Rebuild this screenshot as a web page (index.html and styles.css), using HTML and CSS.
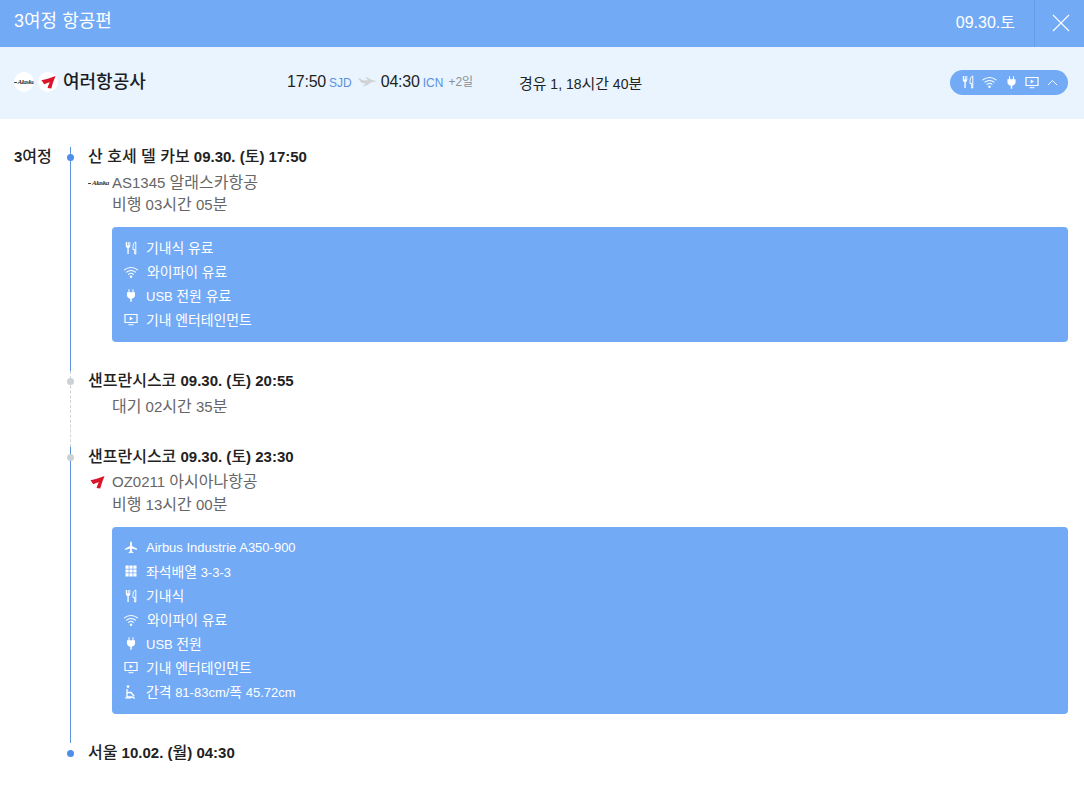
FILE: index.html
```html
<!DOCTYPE html>
<html lang="ko">
<head>
<meta charset="utf-8">
<title>3여정 항공편</title>
<link rel="stylesheet" href="styles.css">
</head>
<body>
<svg class="defs" width="0" height="0" aria-hidden="true">
  <symbol id="i-meal" viewBox="0 0 12 14">
    <path d="M.8 1v3.800c0 1.200.7 2 1.600 2.200V13h1.300V7c.9-.2 1.600-1 1.600-2.200V1h-.9v3.400h-.7V1H3v3.400h-.7V1z" fill="currentColor"/>
    <path d="M10.800 1C9 1.500 8 3.500 8 5.500V8.500h1.700V13h1.100z" fill="none" stroke="currentColor" stroke-width="1"/>
  </symbol>
  <symbol id="i-wifi" viewBox="0 0 16 14">
    <g fill="none" stroke="currentColor" stroke-width="1.100" stroke-linecap="round">
      <path d="M1 4.800C4.900 1.200 11.100 1.200 15 4.800"/>
      <path d="M3.200 7.200C5.900 4.800 10.100 4.800 12.800 7.200"/>
      <path d="M5.400 9.500C6.900 8.200 9.100 8.200 10.600 9.500"/>
    </g>
    <circle cx="8" cy="12" r="1.300" fill="currentColor"/>
  </symbol>
  <symbol id="i-plug" viewBox="0 0 10 14">
    <path d="M2.200 0h1.200v3.500h3.200V0h1.200v3.500H9.500v3.300C9.500 9 8 10.300 5.800 10.500V14H4.200v-3.500C2 10.300.5 9 .5 6.800V3.500h1.700z" fill="currentColor"/>
  </symbol>
  <symbol id="i-screen" viewBox="0 0 14 13">
    <path d="M1 1.500h12v8H1z" fill="none" stroke="currentColor" stroke-width="1.200"/>
    <path d="M5.700 3.600l3.400 1.900-3.400 1.900z" fill="currentColor"/>
    <path d="M4.500 11.200h5v1h-5z" fill="currentColor"/>
  </symbol>
  <symbol id="i-plane" viewBox="0 0 14 14">
    <path d="M7 .5c.6 0 1 .9 1 1.800v3l5.500 3v1.400L8 8v3l1.500 1.200v1L7 12.600l-2.500.6v-1L6 11V8L.5 9.700V8.300l5.500-3v-3C6 1.400 6.400.5 7 .5z" fill="currentColor"/>
  </symbol>
  <symbol id="i-seats" viewBox="0 0 12 12">
    <path d="M.5.500h3.200v3.200H.5zM4.400.500h3.200v3.200H4.400zM8.300.500h3.200v3.200H8.300zM.5 4.400h3.200v3.200H.5zM4.400 4.400h3.200v3.200H4.400zM8.300 4.400h3.200v3.200H8.300zM.5 8.300h3.200v3.200H.5zM4.400 8.300h3.200v3.200H4.400zM8.300 8.300h3.200v3.200H8.300z" fill="currentColor"/>
  </symbol>
  <symbol id="i-legroom" viewBox="0 0 13 14">
    <circle cx="3.500" cy="1.600" r="1.300" fill="currentColor"/>
    <path d="M2.500 4v8h5.300l2.500 1.500" fill="none" stroke="currentColor" stroke-width="1.300"/>
    <path d="M2.500 7.500h4l3.200 3.700" fill="none" stroke="currentColor" stroke-width="1.300"/>
    <path d="M.8 12.800h6" fill="none" stroke="currentColor" stroke-width="1.200"/>
  </symbol>
  <symbol id="i-asiana" viewBox="0 0 16 14">
    <path d="M.5 5C5 4.300 11 2.500 15.500.5 14 4.500 12 9 11 13.800L7 13.500C7.500 11 8.500 9 9.500 7.300 7.500 7.700 5.500 8.300 3.500 9.500z" fill="#d9142b"/>
  </symbol>
</svg>

<header class="topbar">
  <h1 class="topbar-title">3여정 항공편</h1>
  <div class="topbar-date">09.30.토</div>
  <button class="topbar-close" type="button" aria-label="닫기">
    <svg width="18" height="18" viewBox="0 0 18 18"><path d="M1 1l16 16M17 1L1 17" stroke="#fff" stroke-width="1.100" fill="none"/></svg>
  </button>
</header>

<section class="summary">
  <div class="carrier">
    <span class="logo-disc"><span class="alaska-mark">Alaska</span></span>
    <span class="logo-disc"><svg class="asiana" width="15" height="14"><use href="#i-asiana"/></svg></span>
    <strong class="carrier-name">여러항공사</strong>
  </div>
  <div class="times">
    <span class="time">17:50</span><span class="code">SJD</span>
    <svg class="route-plane" width="18" height="10" viewBox="0 0 18 10"><path d="M0 1.200l2 .0 2.500 2L10 3.200 7.500.2h1.600l5 3 3 .2c.6.300.6.800 0 1L13 5.500 9.500 8l-5 1.600L7.500 6.200 3.500 6z" fill="#cfd3d8"/></svg>
    <span class="time">04:30</span><span class="code">ICN</span>
    <span class="plus">+2일</span>
  </div>
  <div class="stops"><span class="ko">경유</span> 1, 18<span class="ko">시간</span> 40<span class="ko">분</span></div>
  <button class="amenity-pill" type="button" aria-label="서비스 접기">
    <svg class="pi-meal" width="12" height="14"><use href="#i-meal"/></svg>
    <svg class="pi-wifi" width="15" height="14"><use href="#i-wifi"/></svg>
    <svg class="pi-plug" width="9" height="13"><use href="#i-plug"/></svg>
    <svg class="pi-screen" width="14" height="13"><use href="#i-screen"/></svg>
    <svg class="pi-chev" width="11" height="7" viewBox="0 0 11 7"><path d="M1 6l4.500-4.500L10 6" fill="none" stroke="currentColor" stroke-width="1"/></svg>
  </button>
</section>

<main class="itinerary">
  <div class="leg-label">3<span class="ko">여정</span></div>
  <div class="timeline">
    <section class="seg seg-flight">
      <span class="dot dot-blue"></span>
      <h2 class="stop"><span class="ko">산 호세 델 카보</span> 09.30. (<span class="ko">토</span>) 17:50</h2>
      <div class="detail flight-line first">
        <span class="mini-logo"><span class="alaska-mark dark">Alaska</span></span>AS1345 <span class="ko">알래스카항공</span>
      </div>
      <div class="detail"><span class="ko">비행</span> 03<span class="ko">시간</span> 05<span class="ko">분</span></div>
      <ul class="amenities">
        <li><svg class="ic" width="12" height="14"><use href="#i-meal"/></svg><span class="ko">기내식 유료</span></li>
        <li><svg class="ic" width="15" height="14"><use href="#i-wifi"/></svg><span class="ko nudge">와이파이 유료</span></li>
        <li><svg class="ic" width="9" height="13"><use href="#i-plug"/></svg><span>USB <span class="ko">전원 유료</span></span></li>
        <li><svg class="ic" width="14" height="13"><use href="#i-screen"/></svg><span class="ko">기내 엔터테인먼트</span></li>
      </ul>
    </section>

    <section class="seg seg-wait">
      <span class="dot dot-grey"></span>
      <h2 class="stop"><span class="ko">샌프란시스코</span> 09.30. (<span class="ko">토</span>) 20:55</h2>
      <div class="detail wait-line"><span class="ko">대기</span> 02<span class="ko">시간</span> 35<span class="ko">분</span></div>
    </section>

    <section class="seg seg-flight seg-second">
      <span class="dot dot-grey"></span>
      <h2 class="stop"><span class="ko">샌프란시스코</span> 09.30. (<span class="ko">토</span>) 23:30</h2>
      <div class="detail flight-line">
        <span class="mini-logo"><svg width="15" height="14"><use href="#i-asiana"/></svg></span>OZ0211 <span class="ko">아시아나항공</span>
      </div>
      <div class="detail"><span class="ko">비행</span> 13<span class="ko">시간</span> 00<span class="ko">분</span></div>
      <ul class="amenities">
        <li><svg class="ic" width="13" height="13"><use href="#i-plane"/></svg><span>Airbus Industrie A350-900</span></li>
        <li><svg class="ic" width="12" height="12"><use href="#i-seats"/></svg><span><span class="ko">좌석배열</span> 3-3-3</span></li>
        <li><svg class="ic" width="12" height="14"><use href="#i-meal"/></svg><span class="ko">기내식</span></li>
        <li><svg class="ic" width="15" height="14"><use href="#i-wifi"/></svg><span class="ko nudge">와이파이 유료</span></li>
        <li><svg class="ic" width="9" height="13"><use href="#i-plug"/></svg><span>USB <span class="ko">전원</span></span></li>
        <li><svg class="ic" width="14" height="13"><use href="#i-screen"/></svg><span class="ko">기내 엔터테인먼트</span></li>
        <li><svg class="ic" width="13" height="14"><use href="#i-legroom"/></svg><span><span class="ko">간격</span> 81-83cm/<span class="ko">폭</span> 45.72cm</span></li>
      </ul>
    </section>

    <section class="seg seg-end">
      <span class="dot dot-blue"></span>
      <h2 class="stop"><span class="ko">서울</span> 10.02. (<span class="ko">월</span>) 04:30</h2>
    </section>
  </div>
</main>
</body>
</html>
```
FILE: styles.css
```css
* { box-sizing: border-box; }
html, body { margin: 0; padding: 0; }
body {
  width: 1084px;
  height: 787px;
  overflow: hidden;
  background: #fff;
  color: #222;
  font-family: "Liberation Sans", "Noto Sans CJK KR", sans-serif;
}
.defs { position: absolute; }
.ko { font-size: 1.067em; }

.topbar {
  display: flex;
  align-items: stretch;
  height: 47px;
  background: #72aaf6;
  color: #fff;
}
.topbar-title {
  flex: 1;
  margin: 0;
  padding-left: 14px;
  font-size: 18px;
  font-weight: 400;
  line-height: 42px;
}
.topbar-date {
  font-size: 16px;
  line-height: 45px;
  padding-right: 19px;
}
.topbar-close {
  width: 50px;
  padding: 0 0 2px 3px;
  background: none;
  border: 0;
  border-left: 1px solid #659ce8;
  display: flex;
  align-items: center;
  justify-content: center;
}

.summary {
  display: flex;
  align-items: center;
  height: 72px;
  padding: 0 16px 2px 14px;
  background: #e9f4fe;
}
.carrier { display: flex; align-items: center; width: 273px; }
.logo-disc {
  display: flex;
  align-items: center;
  justify-content: center;
  width: 20px;
  height: 20px;
  margin-right: 4px;
  border-radius: 50%;
  background: #fff;
  overflow: hidden;
}
.alaska-mark {
  display: flex;
  align-items: center;
  font-family: "Liberation Serif", serif;
  font-style: italic;
  font-weight: 700;
  font-size: 7px;
  line-height: 1;
  letter-spacing: -.5px;
  color: #333;
  white-space: nowrap;
}
.alaska-mark::before {
  content: "";
  width: 3px;
  height: 1px;
  margin-right: 1px;
  background: #444;
}
.asiana { display: block; }
.carrier-name {
  margin-left: 1px;
  font-size: 18px;
  font-weight: 500;
  color: #1c1c24;
  line-height: 24px;
}
.times { display: flex; align-items: baseline; width: 232px; }
.time { font-size: 16px; letter-spacing: -.2px; color: #222; }
.code { margin-left: 3px; font-size: 12px; color: #5c8fdc; }
.route-plane { margin: 0 5px 0 6px; align-self: center; }
.plus { margin-left: 5px; font-size: 12px; color: #8a8f96; position: relative; top: -1px; }
.stops { flex: 1; font-size: 14px; color: #222; }
.amenity-pill {
  display: flex;
  align-items: center;
  width: 118px;
  height: 25px;
  padding: 0 0 0 12px;
  border: 0;
  border-radius: 13px;
  background: #72aaf6;
  color: #fff;
}
.pi-wifi { margin-left: 8px; }
.pi-plug { margin-left: 10px; }
.pi-screen { margin-left: 9px; }
.pi-chev { margin-left: 8px; }

.itinerary {
  display: flex;
  padding: 28px 16px 0 14px;
}
.leg-label {
  width: 56px;
  font-size: 15px;
  font-weight: 700;
  line-height: 20px;
  color: #222;
}
.timeline { flex: 1; }
.seg {
  position: relative;
  padding-left: 17px;
  border-left: 1px solid #5b93df;
}
.seg-flight { padding-bottom: 29px; }
.seg-wait { height: 76px; border-left: 1px dashed #cfd2d6; }
.seg-end { border-left: 0; padding-left: 18px; }
.dot {
  position: absolute;
  left: -4px;
  top: 7px;
  width: 7px;
  height: 7px;
  border-radius: 50%;
}
.seg-end .dot { left: -3px; }
.dot-blue { background: #4e8fea; }
.dot-grey { background: #cdd0d4; }
.stop {
  margin: 0;
  font-size: 15px;
  font-weight: 700;
  line-height: 20px;
  color: #222;
}
.stop .ko, .leg-label .ko { font-weight: 500; }
.detail {
  padding-left: 24px;
  font-size: 15px;
  line-height: 22px;
  color: #666;
}
.wait-line { margin-top: 5px; }
.flight-line { position: relative; margin-top: 4px; }
.flight-line.first { margin-top: 5px; }
.mini-logo {
  position: absolute;
  left: 0;
  top: 3px;
  width: 22px;
  height: 16px;
  display: flex;
  align-items: center;
}
.alaska-mark.dark { color: #333; }
.seg-second .mini-logo { left: 2px; }
.seg-second .detail + .detail { margin-top: 1px; }
.amenities {
  list-style: none;
  margin: 11px 0 0 24px;
  padding: 9px 0 10px 13px;
  border-radius: 4px;
  background: #72aaf6;
  color: #fff;
}
.amenities li {
  display: flex;
  align-items: center;
  height: 24px;
  padding-bottom: 2px;
  font-size: 13px;
  position: relative;
  padding-left: 21px;
}
.ic {
  position: absolute;
  left: 6px;
  top: 5px;
  transform: translateX(-50%);
}
.nudge { margin-left: 1px; }
```
